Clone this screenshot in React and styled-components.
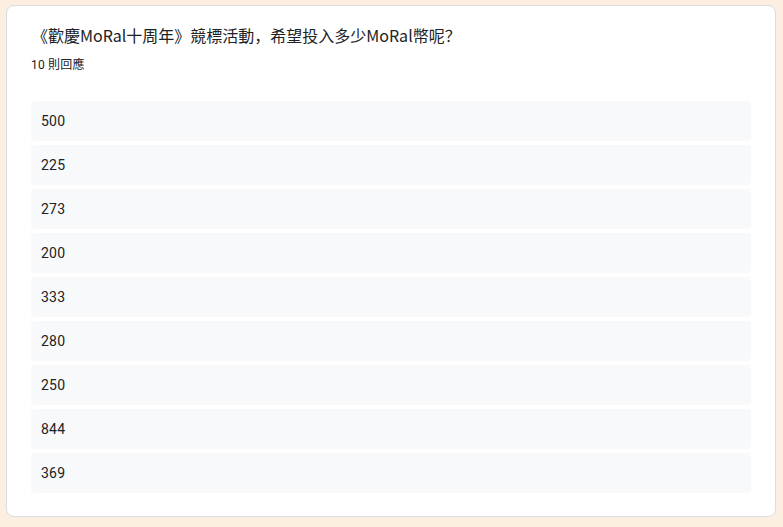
import React from "react";
import styled, { createGlobalStyle } from "styled-components";

const Global = createGlobalStyle`
  html, body {
    margin: 0;
    padding: 0;
    background: #fcefe2;
  }
  body {
    font-family: Roboto, "Noto Sans CJK TC", Arial, sans-serif;
  }
`;

const Page = styled.div`
  padding: 5px 7px 10px 6px;
  box-sizing: border-box;
  width: 783px;
`;

const Card = styled.section`
  background: #fff;
  border: 1px solid #dadce0;
  border-radius: 8px;
  padding: 17px 24px 23px 24px;
  box-sizing: border-box;
`;

const Title = styled.div`
  font-family: "Noto Sans CJK SC", "Noto Sans", sans-serif;
  font-size: 16px;
  line-height: 24px;
  color: #202124;
  letter-spacing: 0;
  padding-left: 1px;
`;

const Count = styled.div`
  margin-top: 10px;
  font-size: 12px;
  line-height: 16px;
  color: #202124;
  letter-spacing: 0.2px;
`;

const List = styled.div`
  margin-top: 28px;
  display: flex;
  flex-direction: column;
  gap: 4px;
`;

const Row = styled.div`
  height: 40px;
  display: flex;
  align-items: center;
  background: #f8f9fa;
  border-radius: 4px;
  padding-left: 10px;
  font-size: 14px;
  color: #202124;
  letter-spacing: 0.2px;
`;

const answers = ["500", "225", "273", "200", "333", "280", "250", "844", "369"];

export default function App() {
  return (
    <>
      <Global />
      <Page>
        <Card>
          <Title>《歡慶MoRal十周年》競標活動，希望投入多少MoRal幣呢？</Title>
          <Count>10 則回應</Count>
          <List>
            {answers.map((a, i) => (
              <Row key={i}>{a}</Row>
            ))}
          </List>
        </Card>
      </Page>
    </>
  );
}
